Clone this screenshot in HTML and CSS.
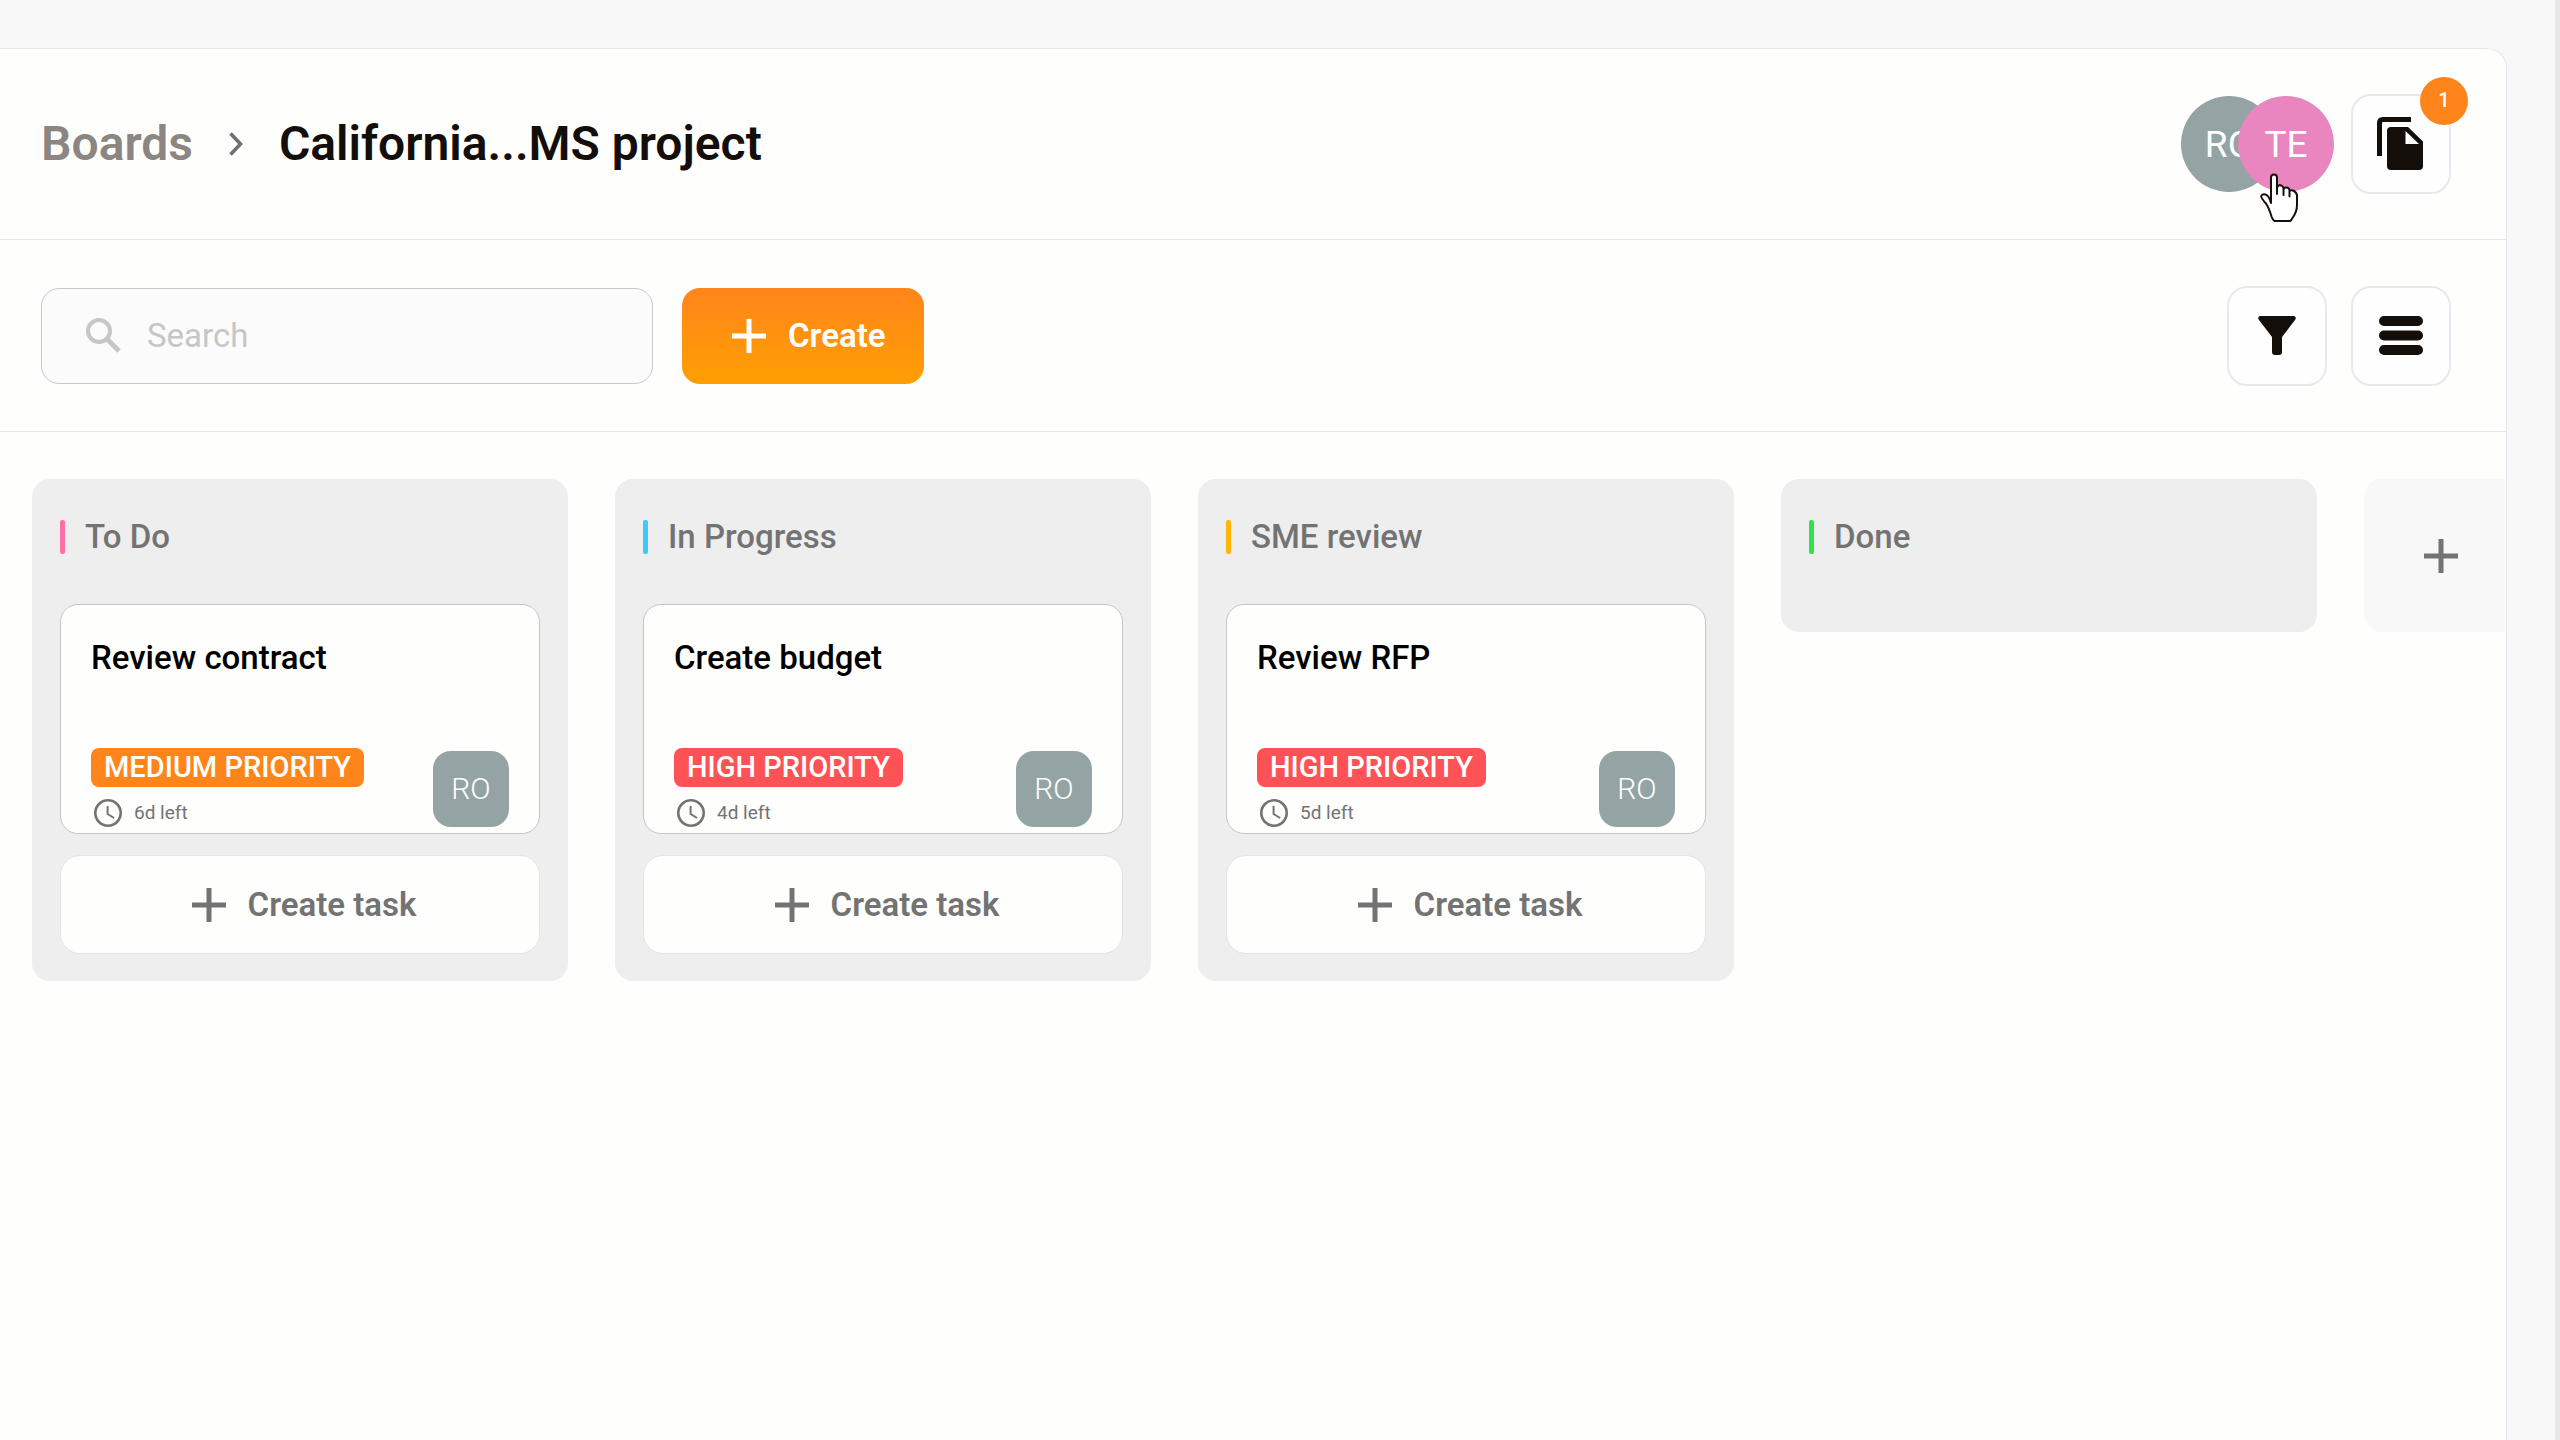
FILE: index.html
```html
<!DOCTYPE html>
<html lang="en">
<head>
<meta charset="utf-8">
<meta name="viewport" content="width=device-width, initial-scale=1">
<title>California...MS project</title>
<link rel="stylesheet" href="styles.css">
</head>
<body>
<svg class="sprite" aria-hidden="true">
  <symbol id="plus" viewBox="0 0 34 34"><path d="M17 0v34M0 17h34" fill="none" stroke="currentColor" stroke-width="5"/></symbol>
  <symbol id="clock" viewBox="0 0 28 28"><circle cx="14" cy="14" r="12.7" fill="none" stroke="currentColor" stroke-width="2.6"/><path d="M13.6 7v8l6.5 4" fill="none" stroke="currentColor" stroke-width="2"/></symbol>
</svg>
<main class="panel">
  <header class="header">
    <nav class="crumbs" aria-label="Breadcrumb">
      <a class="crumb-link" href="#">Boards</a>
      <svg class="chevron" viewBox="0 0 16 26" aria-hidden="true"><path d="M2.5 2.5L12.5 13 2.5 23.5" fill="none" stroke="currentColor" stroke-width="3.6"/></svg>
      <h1 class="crumb-current">California...MS project</h1>
    </nav>
    <div class="header-side">
      <div class="members">
        <span class="member">RO</span>
        <span class="member member-pink">TE</span>
        <svg class="pointer" viewBox="0 0 38 50" aria-hidden="true"><path d="M11 30V4.500Q11 1.500 14 1.500T17 4.500V21V14.500Q17.500 12 20 12.200T23.500 15V22V16.500Q24 14.300 26.500 14.500T29.500 17V23.500V19Q30 16.500 33 17.500T37 22V32Q37 39 32.500 45L30.500 48H14.500Q12.500 46.500 11.500 43.500Q9 35 6 30.500Q1 25 1.200 23.200Q2 20.500 5.500 21.500Q9 22.500 11 30Z" fill="#fff" stroke="#15100c" stroke-width="2" stroke-linejoin="round"/></svg>
      </div>
      <button class="icon-button" type="button" aria-label="Files">
        <svg class="icon-files" viewBox="0 0 48 54" aria-hidden="true"><path d="M34 2.500H6Q2.500 2.500 2.500 6V39" fill="none" stroke="currentColor" stroke-width="5"/><path d="M14 10H31L46 24.500V49Q46 53 42 53H14Q10 53 10 49V14Q10 10 14 10ZM28.500 14V27H42Z" fill="currentColor" fill-rule="evenodd"/></svg>
        <span class="badge">1</span>
      </button>
    </div>
  </header>
  <section class="toolbar">
    <label class="search">
      <svg class="icon-search" viewBox="0 0 35 35" aria-hidden="true"><circle cx="13" cy="13" r="11" fill="none" stroke="currentColor" stroke-width="4"/><path d="M21 21L33 33" fill="none" stroke="currentColor" stroke-width="5"/></svg>
      <input class="search-input" type="search" placeholder="Search" aria-label="Search">
    </label>
    <button class="create" type="button"><svg class="icon-plus" aria-hidden="true"><use href="#plus"/></svg>Create</button>
    <div class="view-actions">
      <button class="icon-button" type="button" aria-label="Filter"><svg class="icon-filter" viewBox="0 0 38 39" aria-hidden="true"><path d="M2 0H36Q39 1 37 4L24 21V36Q24 39 21 39H17Q14 39 14 36V21L1 4Q-1 1 2 0Z" fill="currentColor"/></svg></button>
      <button class="icon-button" type="button" aria-label="View"><svg class="icon-rows" viewBox="0 0 44 39" aria-hidden="true"><path d="M5 5H39M5 19.500H39M5 34H39" fill="none" stroke="currentColor" stroke-width="10" stroke-linecap="round"/></svg></button>
    </div>
  </section>
  <section class="board">
    <section class="column">
      <h2 class="column-title mark-pink">To Do</h2>
      <article class="card">
        <h3 class="card-title">Review contract</h3>
        <div class="card-foot">
          <div class="card-meta"><span class="tag tag-medium">MEDIUM PRIORITY</span><span class="due"><svg class="icon-clock" aria-hidden="true"><use href="#clock"/></svg>6d left</span></div>
          <span class="assignee">RO</span>
        </div>
      </article>
      <button class="create-task" type="button"><svg class="icon-plus" aria-hidden="true"><use href="#plus"/></svg>Create task</button>
    </section>
    <section class="column">
      <h2 class="column-title mark-blue">In Progress</h2>
      <article class="card">
        <h3 class="card-title">Create budget</h3>
        <div class="card-foot">
          <div class="card-meta"><span class="tag tag-high">HIGH PRIORITY</span><span class="due"><svg class="icon-clock" aria-hidden="true"><use href="#clock"/></svg>4d left</span></div>
          <span class="assignee">RO</span>
        </div>
      </article>
      <button class="create-task" type="button"><svg class="icon-plus" aria-hidden="true"><use href="#plus"/></svg>Create task</button>
    </section>
    <section class="column">
      <h2 class="column-title mark-amber">SME review</h2>
      <article class="card">
        <h3 class="card-title">Review RFP</h3>
        <div class="card-foot">
          <div class="card-meta"><span class="tag tag-high">HIGH PRIORITY</span><span class="due"><svg class="icon-clock" aria-hidden="true"><use href="#clock"/></svg>5d left</span></div>
          <span class="assignee">RO</span>
        </div>
      </article>
      <button class="create-task" type="button"><svg class="icon-plus" aria-hidden="true"><use href="#plus"/></svg>Create task</button>
    </section>
    <section class="column">
      <h2 class="column-title mark-green">Done</h2>
    </section>
    <button class="add-column" type="button" aria-label="Add column"><svg class="icon-plus" aria-hidden="true"><use href="#plus"/></svg></button>
  </section>
</main>
</body>
</html>
```
FILE: styles.css
```css
* { box-sizing: border-box; }

body {
  display: flex;
  min-height: 100vh;
  margin: 0;
  padding: 48px 48px 0 0;
  border-right: 5px solid #e7e7e8;
  background: #f8f8f9;
  color: #130e09;
  font-family: Roboto, "Liberation Sans", sans-serif;
  font-size: 33px;
}

h1, h2, h3 { margin: 0; }

button {
  padding: 0;
  color: inherit;
  font: inherit;
  cursor: pointer;
}

svg { flex: none; }

.sprite {
  position: absolute;
  width: 0;
  height: 0;
}

.panel {
  flex: 1;
  min-width: 0;
  display: flex;
  flex-direction: column;
  border: solid #e6e7ea;
  border-width: 1px 1px 0 0;
  border-top-right-radius: 20px;
  background: #fefefd;
}

.header, .toolbar {
  display: flex;
  align-items: center;
  height: 192px;
  padding: 0 55px 0 41px;
  border-bottom: 1px solid #e6e7e9;
}

.header { height: 191px; }

.crumbs {
  display: flex;
  align-items: center;
  flex: 1;
  font-size: 48px;
  line-height: 56px;
  font-weight: 600;
}

.crumb-link {
  color: #8b8682;
  text-decoration: none;
}

.chevron {
  width: 16px;
  height: 26px;
  margin: 0 35px;
  color: #6f7073;
}

.crumb-current {
  font-size: 48px;
  font-weight: 600;
}

.header-side, .members, .view-actions { display: flex; }

.header-side {
  align-items: center;
  gap: 17px;
}

.members { position: relative; }

.member {
  display: grid;
  place-items: center;
  width: 96px;
  height: 96px;
  border-radius: 50%;
  background: #94a4a5;
  color: #fff;
  font-size: 37px;
  font-weight: 400;
}

.member-pink {
  margin-left: -39px;
  background: #ea86bf;
}

.pointer {
  position: absolute;
  left: 79px;
  top: 77px;
  width: 38px;
  height: 50px;
}

.icon-button {
  position: relative;
  display: grid;
  place-items: center;
  width: 100px;
  height: 100px;
  border: 2px solid #e8e9ec;
  border-radius: 20px;
  background: #fefefe;
}

.icon-files { width: 48px; height: 54px; }
.icon-filter { width: 38px; height: 39px; }
.icon-rows { width: 44px; height: 39px; }
.icon-plus { width: 34px; height: 34px; }
.icon-clock { width: 28px; height: 28px; }

.badge {
  position: absolute;
  top: -19px;
  right: -19px;
  width: 48px;
  height: 48px;
  border-radius: 50%;
  background: #ff851b;
  color: #fff;
  font-size: 20px;
  line-height: 46px;
  font-weight: 500;
  text-align: center;
}

.search {
  display: flex;
  align-items: center;
  gap: 26px;
  flex: 0 1 612px;
  height: 96px;
  padding: 0 44px;
  border: 1px solid #c7c8cc;
  border-radius: 18px;
  background: #fbfbfc;
  color: #c6c6c6;
}

.icon-search { width: 35px; height: 35px; }

.search-input {
  flex: 1;
  min-width: 0;
  padding: 0;
  border: 0;
  outline: 0;
  background: none;
  color: #130e09;
  font: inherit;
}

.search-input::placeholder {
  color: #c6c6c6;
  opacity: 1;
}

.create {
  display: flex;
  align-items: center;
  gap: 22px;
  width: 242px;
  height: 96px;
  margin-left: 29px;
  padding-left: 50px;
  border: 0;
  border-radius: 18px;
  background: linear-gradient(#ff851b, #ff9f02);
  color: #fff;
  font-weight: 600;
}

.view-actions {
  gap: 24px;
  margin-left: auto;
}

.board {
  flex: 1;
  display: flex;
  align-items: flex-start;
  gap: 47px;
  padding: 47px 0 47px 32px;
  overflow: hidden;
}

.column {
  flex: 0 0 536px;
  min-height: 153px;
  padding: 0 28px 27px;
  border-radius: 18px;
  background: #eeeeef;
}

.column-title {
  display: flex;
  align-items: center;
  gap: 20px;
  height: 125px;
  padding-bottom: 10px;
  color: #737373;
  font-size: 33px;
  font-weight: 500;
}

.column-title::before {
  content: "";
  width: 5px;
  height: 34px;
  border-radius: 2px;
  background: currentColor;
}

.mark-pink::before { background: #ff6ea6; }
.mark-blue::before { background: #3fc8fb; }
.mark-amber::before { background: #ffb608; }
.mark-green::before { background: #30e348; }

.card {
  display: flex;
  flex-direction: column;
  justify-content: space-between;
  height: 230px;
  padding: 34px 30px 6px;
  border: 1px solid #c5c5c8;
  border-radius: 18px;
  background: #fefefd;
}

.card-title {
  color: #000;
  font-size: 33px;
  line-height: 38px;
  font-weight: 500;
}

.card-foot {
  display: flex;
  align-items: flex-end;
  justify-content: space-between;
}

.card-meta {
  display: flex;
  flex-direction: column;
  align-items: flex-start;
  gap: 12px;
}

.tag {
  height: 39px;
  padding: 0 13px;
  border-radius: 8px;
  color: #fff;
  font-size: 29px;
  line-height: 38px;
  font-weight: 500;
}

.tag-medium { background: #ff851b; }
.tag-high { background: #ff5257; }

.due {
  display: flex;
  align-items: center;
  gap: 12px;
  padding-left: 3px;
  color: #737373;
  font-size: 19px;
  line-height: 28px;
}

.assignee {
  display: grid;
  place-items: center;
  width: 76px;
  height: 76px;
  border-radius: 18px;
  background: #94a4a5;
  color: #fff;
  font-size: 30px;
  line-height: 34px;
  font-weight: 300;
}

.create-task {
  display: flex;
  align-items: center;
  justify-content: center;
  gap: 22px;
  width: 100%;
  height: 99px;
  margin-top: 21px;
  padding-left: 8px;
  border: 1px solid #e4e4e6;
  border-radius: 20px;
  background: #fefefd;
  color: #737373;
  font-weight: 600;
}

.add-column {
  display: grid;
  place-items: center;
  flex: 0 0 153px;
  height: 153px;
  border: 0;
  border-radius: 18px;
  background: #f8f8f9;
  color: #737373;
}
```
